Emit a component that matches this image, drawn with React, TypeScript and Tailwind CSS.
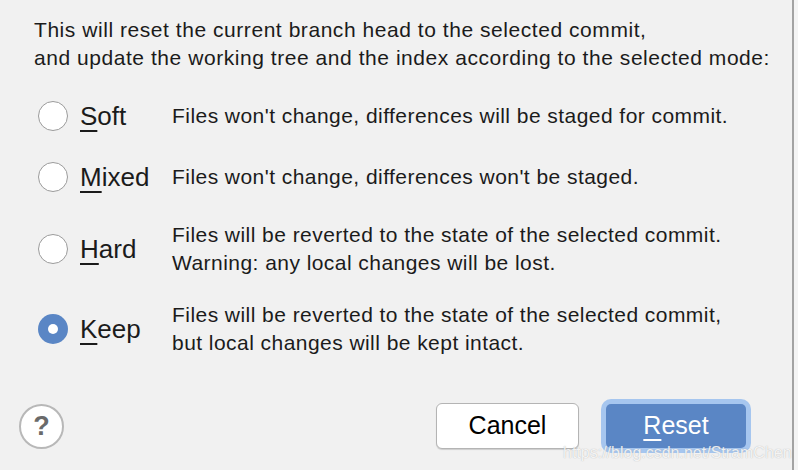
import React from 'react';

type Mode = {
  key: string;
  label: string;
  lines: string[];
  mt: string;
};

const modes: Mode[] = [
  { key: 'soft', label: 'Soft', lines: ["Files won't change, differences will be staged for commit."], mt: 'mt-[29px]' },
  { key: 'mixed', label: 'Mixed', lines: ["Files won't change, differences won't be staged."], mt: 'mt-[31px]' },
  {
    key: 'hard',
    label: 'Hard',
    lines: ['Files will be reverted to the state of the selected commit.', 'Warning: any local changes will be lost.'],
    mt: 'mt-[29px]',
  },
  {
    key: 'keep',
    label: 'Keep',
    lines: ['Files will be reverted to the state of the selected commit,', 'but local changes will be kept intact.'],
    mt: 'mt-[24px]',
  },
];

function Radio({ checked }: { checked: boolean }) {
  if (checked) {
    return (
      <div className="w-[30px] h-[30px] rounded-full bg-[#5a86c5] flex items-center justify-center shrink-0">
        <div className="w-[10px] h-[10px] rounded-full bg-white" />
      </div>
    );
  }
  return <div className="w-[30px] h-[30px] rounded-full bg-white border-[1.5px] border-[#9b9b9b] shrink-0" />;
}

function Mnemonic({ text }: { text: string }) {
  return (
    <>
      <span className="underline decoration-2 underline-offset-[5px]">{text[0]}</span>
      {text.slice(1)}
    </>
  );
}

export default function App() {
  const [selected, setSelected] = React.useState('keep');

  return (
    <div
      className="relative w-[798px] h-[470px] bg-[#f4f4f4] flex text-[#1b1b1b]"
      style={{ fontFamily: '"Liberation Sans", Arial, sans-serif' }}
    >
      <div className="w-[794px] h-full bg-[#f1f1f1] border-r-2 border-[#a3a3a3] flex flex-col">
        <div className="pl-[34px] pt-[16px] text-[21px] leading-[28px] tracking-[0.55px]">
          <p>This will reset the current branch head to the selected commit,</p>
          <p>and update the working tree and the index according to the selected mode:</p>
        </div>

        {modes.map((m) => (
          <div
            key={m.key}
            className={`${m.mt} flex items-center pl-[38px] cursor-default`}
            onClick={() => setSelected(m.key)}
          >
            <Radio checked={selected === m.key} />
            <div className="w-[104px] pl-[12px] text-[26px] leading-[28px]">
              <Mnemonic text={m.label} />
            </div>
            <div className="text-[21px] leading-[28px] tracking-[0.45px]">
              {m.lines.map((l) => (
                <p key={l}>{l}</p>
              ))}
            </div>
          </div>
        ))}

        <div className="mt-auto mb-[21px] flex items-center pl-[19px] pr-[46px]">
          <button className="w-[45px] h-[45px] rounded-full bg-white border-2 border-[#b8b8b8] flex items-center justify-center text-[27px] font-bold text-[#6a6a6a]">
            ?
          </button>
          <button className="ml-auto w-[143px] h-[46px] rounded-[6px] bg-white border-[1.5px] border-[#b4b4b4] shadow-[0_1px_1px_rgba(0,0,0,0.15)] text-[25px] text-black">
            Cancel
          </button>
          <button className="ml-[27px] w-[140px] h-[44px] rounded-[5px] bg-[#5a86c5] ring-[5px] ring-[#a6c6ef] text-[25px] text-white">
            <Mnemonic text="Reset" />
          </button>
        </div>
      </div>

      <div className="absolute left-[563px] top-[441px] whitespace-nowrap text-[16px] text-white/85 [text-shadow:0_0_1px_rgba(120,120,120,0.6)] pointer-events-none">
        https://blog.csdn.net/StramChen
      </div>
    </div>
  );
}
